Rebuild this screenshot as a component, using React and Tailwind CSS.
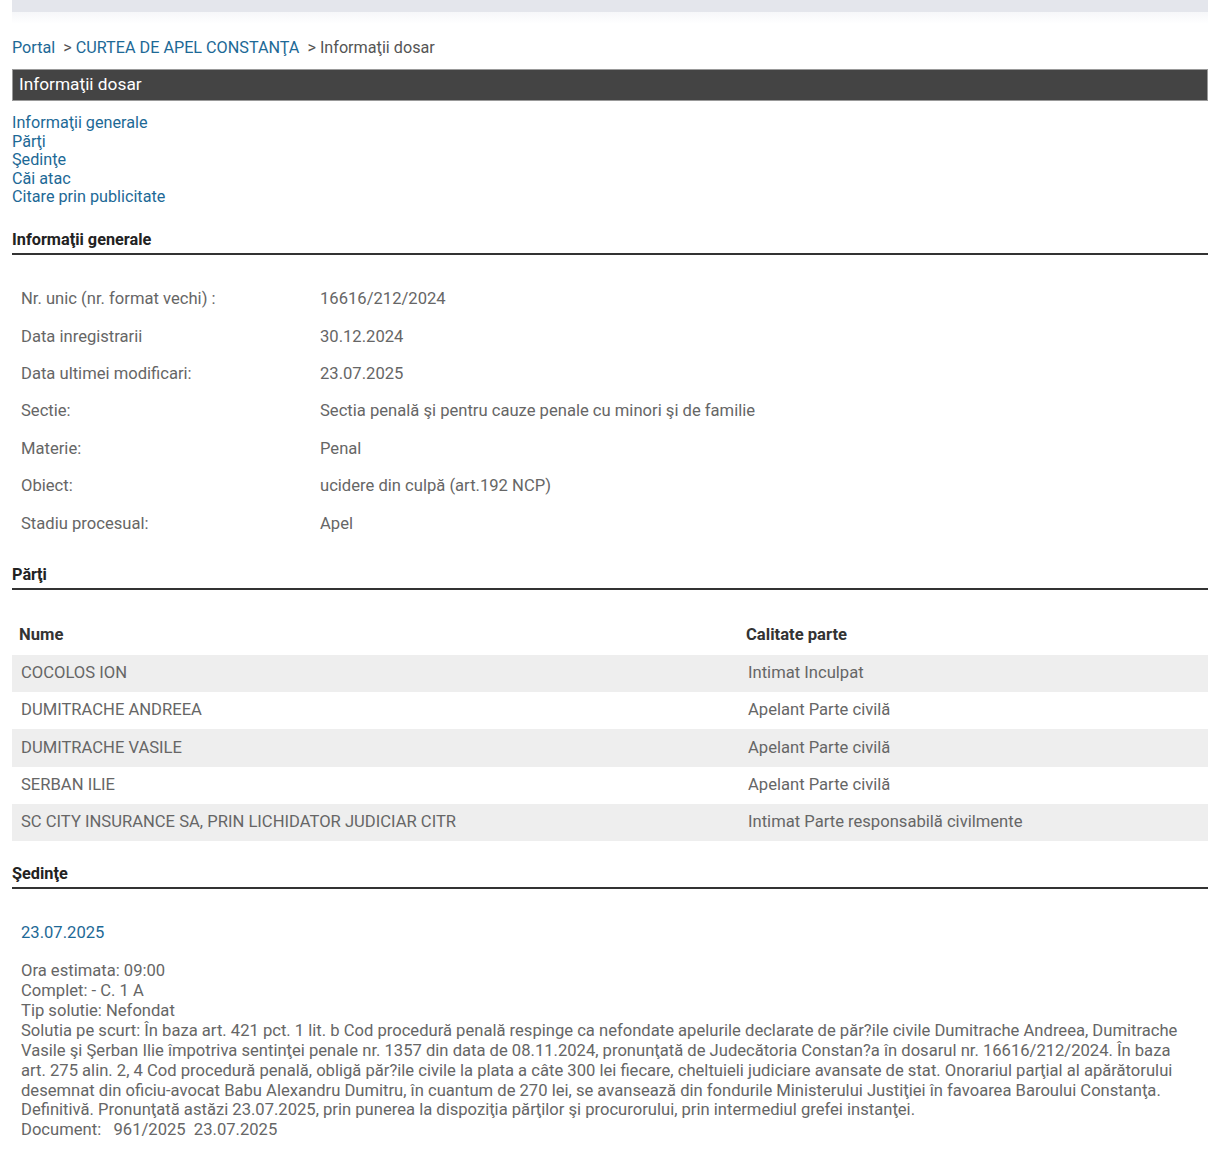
export default function App() {
  const info = [
    ["Nr. unic (nr. format vechi) :", "16616/212/2024"],
    ["Data inregistrarii", "30.12.2024"],
    ["Data ultimei modificari:", "23.07.2025"],
    ["Sectie:", "Sectia penală şi pentru cauze penale cu minori şi de familie"],
    ["Materie:", "Penal"],
    ["Obiect:", "ucidere din culpă (art.192 NCP)"],
    ["Stadiu procesual:", "Apel"],
  ];
  const parti = [
    ["COCOLOS ION", "Intimat Inculpat"],
    ["DUMITRACHE ANDREEA", "Apelant Parte civilă"],
    ["DUMITRACHE VASILE", "Apelant Parte civilă"],
    ["SERBAN ILIE", "Apelant Parte civilă"],
    ["SC CITY INSURANCE SA, PRIN LICHIDATOR JUDICIAR CITR", "Intimat Parte responsabilă civilmente"],
  ];
  const link = "text-[#1d6996]";
  const heading = "border-b-2 border-[#333] pb-[3px] text-[16.3px] font-bold leading-5 text-[#222]";
  return (
    <div className="min-h-[1171px] bg-white px-3 text-[16.6px] text-[#666]" style={{ fontFamily: "Roboto, 'Liberation Sans', sans-serif" }}>
      <div className="h-3 bg-[#e4e6ec]" />
      <div className="h-3 bg-gradient-to-b from-[#f6f7f9] to-white" />

      <div className="mt-[14px] flex h-[20px] items-center text-[16.2px] leading-5 text-[#555]">
        <span className={link}>Portal</span>
        <span className="ml-2">&gt;</span>
        <span className={`ml-1 ${link}`}>CURTEA DE APEL CONSTANŢA</span>
        <span className="ml-2">&gt; Informaţii dosar</span>
      </div>

      <div className="mt-[11px] flex h-[32px] items-center border border-[#999] bg-[#444] px-[6px] text-[17.3px] text-white">
        Informaţii dosar
      </div>

      <div className={`mt-[13px] flex flex-col text-[16.2px] leading-[18.6px] ${link}`}>
        <span>Informaţii generale</span>
        <span>Părţi</span>
        <span>Şedinţe</span>
        <span>Căi atac</span>
        <span>Citare prin publicitate</span>
      </div>

      <div className={`mt-[23px] ${heading}`}>Informaţii generale</div>

      <div className="mt-[26px] flex flex-col">
        {info.map(([k, v]) => (
          <div key={k} className="flex h-[37.4px] items-center px-[9px]">
            <span className="w-[299px]">{k}</span>
            <span>{v}</span>
          </div>
        ))}
      </div>

      <div className={`mt-[22px] ${heading}`}>Părţi</div>

      <div className="mt-[26px] flex h-[39px] items-center px-[7px] text-[16.6px] font-bold text-[#333]">
        <span className="w-[727px]">Nume</span>
        <span>Calitate parte</span>
      </div>
      <div className="flex flex-col">
        {parti.map(([n, c], i) => (
          <div key={n} className={`flex h-[37.3px] items-center px-[9px] ${i % 2 === 0 ? "bg-[#eeeeee]" : ""}`}>
            <span className="w-[727px]">{n}</span>
            <span>{c}</span>
          </div>
        ))}
      </div>

      <div className={`mt-[23px] ${heading}`}>Şedinţe</div>

      <div className="px-[9px] pt-[34px] leading-[19.9px]">
        <div className={link}>23.07.2025</div>
        <div className="mt-[18px]">Ora estimata: 09:00</div>
        <div>Complet: - C. 1 A</div>
        <div>Tip solutie: Nefondat</div>
        <div>
          Solutia pe scurt: În baza art. 421 pct. 1 lit. b Cod procedură penală respinge ca nefondate apelurile declarate de păr?ile civile Dumitrache Andreea, Dumitrache Vasile şi Şerban Ilie împotriva sentinţei penale nr. 1357 din data de 08.11.2024, pronunţată de Judecătoria Constan?a în dosarul nr. 16616/212/2024. În baza art. 275 alin. 2, 4 Cod procedură penală, obligă păr?ile civile la plata a câte 300 lei fiecare, cheltuieli judiciare avansate de stat. Onorariul parţial al apărătorului desemnat din oficiu-avocat Babu Alexandru Dumitru, în cuantum de 270 lei, se avansează din fondurile Ministerului Justiţiei în favoarea Baroului Constanţa. Definitivă. Pronunţată astăzi 23.07.2025, prin punerea la dispoziţia părţilor şi procurorului, prin intermediul grefei instanţei.
        </div>
        <div className="whitespace-pre">Document:   961/2025  23.07.2025</div>
      </div>
    </div>
  );
}
